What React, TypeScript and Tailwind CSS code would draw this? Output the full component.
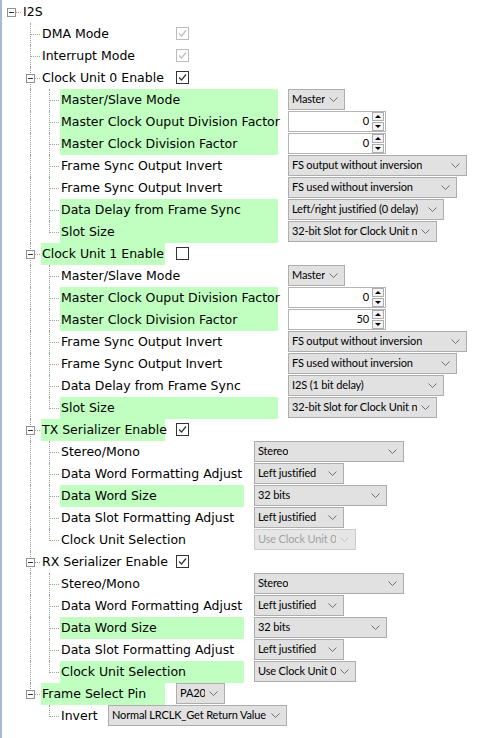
import type { ReactNode } from "react";

type Node = {
  label: string;
  green?: boolean;
  labelW?: string;
  gap?: string;
  control?: ReactNode;
  children?: Node[];
};

type FlatRow = { node: Node; level: number; more: boolean[]; last: boolean };

const LINE = "border-[#a0a0a0] border-dotted";
const CTRL_FONT = "font-['Lato',sans-serif] text-[11px] tracking-[-0.15px]";

function Chevron({ disabled }: { disabled?: boolean }) {
  return (
    <svg width="9" height="5" viewBox="0 0 9 5" className="shrink-0">
      <polyline
        points="0.5,0.5 4.5,4.5 8.5,0.5"
        fill="none"
        stroke={disabled ? "#c4c4c4" : "#707070"}
        strokeWidth="1"
      />
    </svg>
  );
}

function Select({ w, value, disabled }: { w: string; value: string; disabled?: boolean }) {
  return (
    <div
      className={`${w} flex h-[21px] items-center justify-between gap-[4px] border pl-[3px] pr-[6px] ${CTRL_FONT} whitespace-nowrap ${
        disabled
          ? "border-[#cccccc] bg-[#e6e6e6] text-[#a2a2a2]"
          : "border-[#adadad] bg-[#e1e1e1] text-black"
      }`}
    >
      <span className="overflow-hidden">{value}</span>
      <Chevron disabled={disabled} />
    </div>
  );
}

function Spinner({ value }: { value: string }) {
  return (
    <div className="flex h-[21px] w-[98px] items-center border border-[#b4b4b4] bg-white pr-px">
      <span className={`flex-1 pr-[3px] text-right ${CTRL_FONT} text-black`}>{value}</span>
      <div className="flex flex-col gap-px">
        <div className="flex h-[9px] w-[12px] items-center justify-center border border-[#adadad] bg-[#f3f3f3]">
          <div className="h-0 w-0 border-x-[3px] border-b-[3px] border-x-transparent border-b-black" />
        </div>
        <div className="flex h-[9px] w-[12px] items-center justify-center border border-[#adadad] bg-[#f3f3f3]">
          <div className="h-0 w-0 border-x-[3px] border-t-[3px] border-x-transparent border-t-black" />
        </div>
      </div>
    </div>
  );
}

function Check({ checked, disabled }: { checked?: boolean; disabled?: boolean }) {
  const c = disabled ? "#bcbcbc" : "#333333";
  return (
    <div
      className={`mt-[4px] h-[13px] w-[13px] border bg-white ${
        disabled ? "border-[#bcbcbc]" : "border-[#333333]"
      }`}
    >
      {checked && (
        <svg width="11" height="11" viewBox="0 0 11 11">
          <polyline points="2,5.5 4.5,8 9,2.5" fill="none" stroke={c} strokeWidth="1.2" />
        </svg>
      )}
    </div>
  );
}

const L2 = "w-[218px]";
const L2s = "w-[184px]";
const L1 = "w-[124px]";

function clockUnit(variant: 0 | 1): Node[] {
  const g0 = variant === 0;
  return [
    { label: "Master/Slave Mode", green: g0, labelW: L2, control: <Select w="w-[57px]" value="Master" /> },
    { label: "Master Clock Ouput Division Factor", green: true, labelW: L2, control: <Spinner value="0" /> },
    { label: "Master Clock Division Factor", green: true, labelW: L2, control: <Spinner value={g0 ? "0" : "50"} /> },
    { label: "Frame Sync Output Invert", labelW: L2, control: <Select w="w-[179px]" value="FS output without inversion" /> },
    { label: "Frame Sync Output Invert", labelW: L2, control: <Select w="w-[169px]" value="FS used without inversion" /> },
    {
      label: "Data Delay from Frame Sync",
      green: g0,
      labelW: L2,
      control: <Select w="w-[156px]" value={g0 ? "Left/right justified (0 delay)" : "I2S (1 bit delay)"} />,
    },
    { label: "Slot Size", green: true, labelW: L2, control: <Select w="w-[149px]" value="32-bit Slot for Clock Unit n" /> },
  ];
}

function serializer(rx: boolean): Node[] {
  return [
    { label: "Stereo/Mono", labelW: L2s, control: <Select w="w-[150px]" value="Stereo" /> },
    { label: "Data Word Formatting Adjust", labelW: L2s, control: <Select w="w-[90px]" value="Left justified" /> },
    { label: "Data Word Size", green: true, labelW: L2s, control: <Select w="w-[133px]" value="32 bits" /> },
    { label: "Data Slot Formatting Adjust", labelW: L2s, control: <Select w="w-[90px]" value="Left justified" /> },
    {
      label: "Clock Unit Selection",
      green: rx,
      labelW: L2s,
      control: <Select w="w-[102px]" value="Use Clock Unit 0" disabled={!rx} />,
    },
  ];
}

const tree: Node = {
  label: "I2S",
  children: [
    { label: "DMA Mode", labelW: L1, gap: "ml-[11px]", control: <Check checked disabled /> },
    { label: "Interrupt Mode", labelW: L1, gap: "ml-[11px]", control: <Check checked disabled /> },
    { label: "Clock Unit 0 Enable", labelW: L1, gap: "ml-[11px]", control: <Check checked />, children: clockUnit(0) },
    { label: "Clock Unit 1 Enable", green: true, labelW: L1, gap: "ml-[11px]", control: <Check />, children: clockUnit(1) },
    { label: "TX Serializer Enable", green: true, labelW: L1, gap: "ml-[11px]", control: <Check checked />, children: serializer(false) },
    { label: "RX Serializer Enable", labelW: L1, gap: "ml-[11px]", control: <Check checked />, children: serializer(true) },
    {
      label: "Frame Select Pin",
      green: true,
      labelW: L1,
      gap: "ml-[11px]",
      control: <Select w="w-[49px]" value="PA20" />,
      children: [
        {
          label: "Invert",
          labelW: "w-[38px]",
          control: <Select w="w-[179px]" value="Normal LRCLK_Get Return Value" />,
        },
      ],
    },
  ],
};

function flatten(node: Node, level: number, more: boolean[], last: boolean, out: FlatRow[]) {
  out.push({ node, level, more, last });
  const kids = node.children ?? [];
  kids.forEach((ch, i) => flatten(ch, level + 1, [...more, !last && level > 0], i === kids.length - 1, out));
}

function Expander() {
  return (
    <div className="absolute left-[5px] top-[7px] h-[9px] w-[9px] border border-[#919191] bg-white">
      <div className="absolute left-px top-[3px] h-px w-[5px] bg-[#333333]" />
    </div>
  );
}

function TreeRow({ row }: { row: FlatRow }) {
  const { node, level, more, last } = row;
  return (
    <div className="flex h-[22px] items-start">
      {more.map((m, i) => (
        <div key={i} className="relative h-[22px] w-[19px] shrink-0">
          {m && <div className={`absolute left-[9px] top-0 h-[22px] border-l ${LINE}`} />}
        </div>
      ))}
      <div className="relative h-[22px] w-[19px] shrink-0">
        {level > 0 && (
          <div className={`absolute left-[9px] top-0 border-l ${LINE} ${last ? "h-[12px]" : "h-[22px]"}`} />
        )}
        <div className={`absolute left-[10px] top-[11px] w-[9px] border-t ${LINE}`} />
        {node.children && <Expander />}
      </div>
      <div
        className={`${node.labelW ?? ""} ml-px flex h-[22px] shrink-0 items-center whitespace-nowrap pl-px font-['DejaVu_Sans',sans-serif] text-[12.5px] text-black ${
          node.green ? "bg-[#c0ffc0]" : ""
        }`}
      >
        {node.label}
      </div>
      {node.control && <div className={`${node.gap ?? "ml-[10px]"} shrink-0`}>{node.control}</div>}
    </div>
  );
}

export default function App() {
  const rows: FlatRow[] = [];
  flatten(tree, 0, [], true, rows);
  return (
    <div className="h-[738px] w-[488px] overflow-hidden border-l-2 border-[#a3b7d6] bg-white pt-px">
      {rows.map((r, i) => (
        <TreeRow key={i} row={r} />
      ))}
    </div>
  );
}
